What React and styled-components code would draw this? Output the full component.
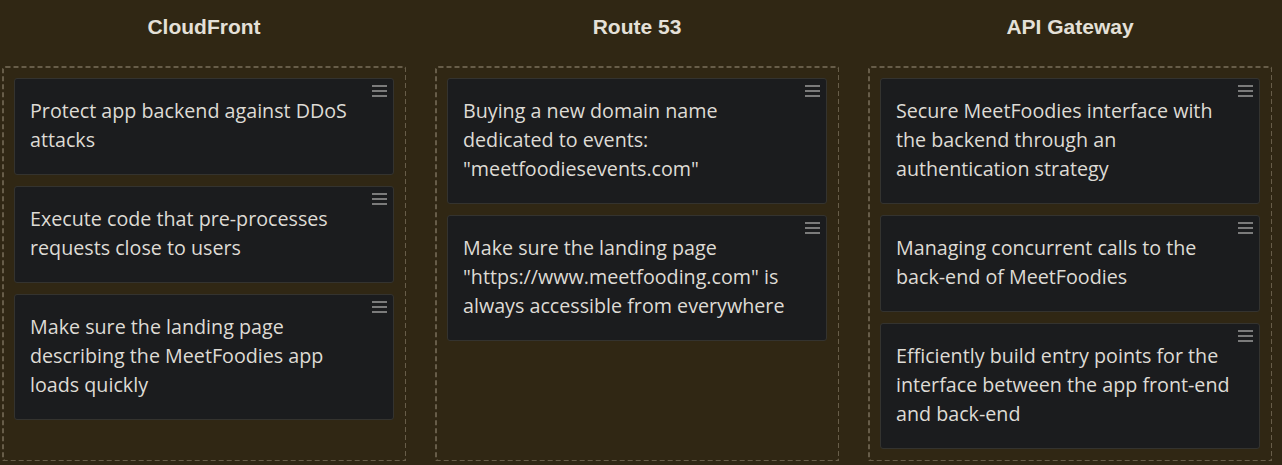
import React from "react";
import styled, { createGlobalStyle } from "styled-components";

const Global = createGlobalStyle`
  html, body {
    margin: 0;
    padding: 0;
    background: #302714;
  }
  body {
    font-family: "Open Sans", "Liberation Sans", Arial, sans-serif;
  }
`;

const dashes = encodeURIComponent(
  "<svg xmlns='http://www.w3.org/2000/svg' width='100%' height='100%'>" +
    "<rect x='0.5' y='0.5' width='100%' height='100%' rx='3' fill='none' " +
    "stroke='#675d49' stroke-width='3' stroke-dasharray='5 3' /></svg>"
);

const Board = styled.div`
  display: grid;
  grid-template-columns: repeat(3, 404px);
  column-gap: 29px;
  padding: 0 0 0 2px;
  height: 465px;
  box-sizing: border-box;
`;

const Column = styled.div`
  display: flex;
  flex-direction: column;
`;

const Title = styled.h2`
  margin: 0;
  height: 66px;
  padding-top: 15px;
  box-sizing: border-box;
  text-align: center;
  font-family: "Liberation Sans", Arial, sans-serif;
  font-size: 21px;
  font-weight: 700;
  color: #e4e0d8;
`;

const Lane = styled.div`
  flex: 1;
  margin-bottom: 5px;
  background-image: url("data:image/svg+xml,${dashes}");
  padding: 12px 12px;
  display: flex;
  flex-direction: column;
  gap: 11px;
`;

const Card = styled.div`
  position: relative;
  background: #1b1c1e;
  border: 1px solid #34332f;
  border-radius: 3px;
  padding: 17px 26px 20px 15px;
  font-size: 19.7px;
  line-height: 29px;
  color: #dedbd5;
`;

const Handle = styled.svg`
  position: absolute;
  top: 6px;
  right: 6px;
`;

const Grip = () => (
  <Handle width="15" height="12" viewBox="0 0 15 12">
    <rect x="0" y="0" width="15" height="2" fill="#7b7b7b" />
    <rect x="0" y="5" width="15" height="2" fill="#7b7b7b" />
    <rect x="0" y="10" width="15" height="2" fill="#7b7b7b" />
  </Handle>
);

const columns = [
  {
    title: "CloudFront",
    cards: [
      "Protect app backend against DDoS attacks",
      "Execute code that pre-processes requests close to users",
      "Make sure the landing page describing the MeetFoodies app loads quickly",
    ],
  },
  {
    title: "Route 53",
    cards: [
      'Buying a new domain name dedicated to events: "meetfoodiesevents.com"',
      'Make sure the landing page "https://www.meetfooding.com" is always accessible from everywhere',
    ],
  },
  {
    title: "API Gateway",
    cards: [
      "Secure MeetFoodies interface with the backend through an authentication strategy",
      "Managing concurrent calls to the back-end of MeetFoodies",
      "Efficiently build entry points for the interface between the app front-end and back-end",
    ],
  },
];

const App = () => {
  return (
    <Board>
      <Global />
      {columns.map((col) => (
        <Column key={col.title}>
          <Title>{col.title}</Title>
          <Lane>
            {col.cards.map((text) => (
              <Card key={text}>
                <Grip />
                {text}
              </Card>
            ))}
          </Lane>
        </Column>
      ))}
    </Board>
  );
};

export default App;
